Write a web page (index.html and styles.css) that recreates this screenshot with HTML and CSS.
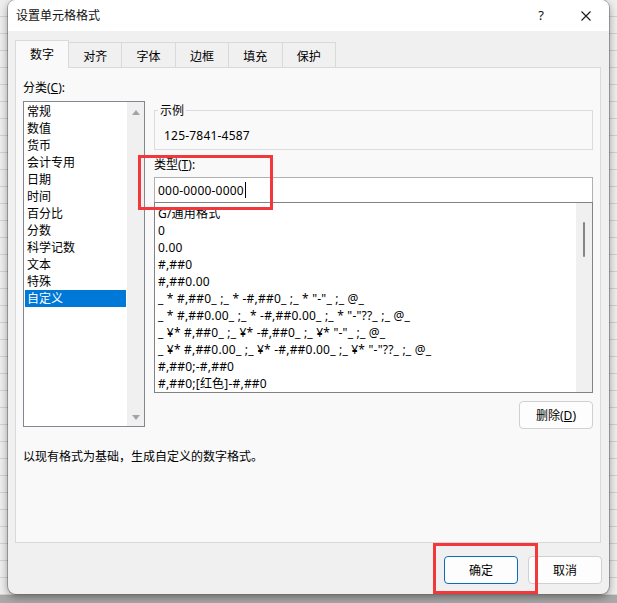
FILE: index.html
```html
<!DOCTYPE html>
<html lang="zh-CN">
<head>
<meta charset="utf-8">
<title>设置单元格格式</title>
<link rel="stylesheet" href="styles.css">
</head>
<body>
<div class="desk">
  <div class="dialog">
    <div class="titlebar">
      <span class="title">设置单元格格式</span>
      <span class="help">?</span>
      <svg class="close" width="10" height="10" viewBox="0 0 10 10"><path d="M0.5 0.5L9.5 9.5M9.5 0.5L0.5 9.5" stroke="#1a1a1a" stroke-width="1.1" fill="none"/></svg>
    </div>
    <div class="main">
      <div class="tabs">
        <div class="tab sel">数字</div>
        <div class="tab">对齐</div>
        <div class="tab">字体</div>
        <div class="tab">边框</div>
        <div class="tab">填充</div>
        <div class="tab">保护</div>
      </div>
      <div class="panel">
        <div class="cols">
          <div class="left">
            <div class="lbl">分类(<u>C</u>):</div>
            <div class="catbox">
              <ul class="catlist">
                <li>常规</li>
                <li>数值</li>
                <li>货币</li>
                <li>会计专用</li>
                <li>日期</li>
                <li>时间</li>
                <li>百分比</li>
                <li>分数</li>
                <li>科学记数</li>
                <li>文本</li>
                <li>特殊</li>
                <li class="on">自定义</li>
              </ul>
              <div class="vscroll">
                <span class="arr up"></span>
                <span class="arr down"></span>
              </div>
            </div>
          </div>
          <div class="right">
            <fieldset class="sample">
              <legend>示例</legend>
              <div class="sval">125-7841-4587</div>
            </fieldset>
            <div class="lbl tlbl">类型(<u>T</u>):</div>
            <div class="typeinput"><span>000-0000-0000</span><span class="caret"></span></div>
            <div class="fmtbox">
              <ul class="fmtlist">
                <li>G/通用格式</li>
                <li>0</li>
                <li>0.00</li>
                <li>#,##0</li>
                <li>#,##0.00</li>
                <li>_ * #,##0_ ;_ * -#,##0_ ;_ * "-"_ ;_ @_</li>
                <li>_ * #,##0.00_ ;_ * -#,##0.00_ ;_ * "-"??_ ;_ @_</li>
                <li>_ ¥* #,##0_ ;_ ¥* -#,##0_ ;_ ¥* "-"_ ;_ @_</li>
                <li>_ ¥* #,##0.00_ ;_ ¥* -#,##0.00_ ;_ ¥* "-"??_ ;_ @_</li>
                <li>#,##0;-#,##0</li>
                <li>#,##0;[红色]-#,##0</li>
              </ul>
              <div class="vscroll2"><span class="thumb"></span></div>
            </div>
            <div class="delrow"><button class="btn">删除(<u>D</u>)</button></div>
          </div>
        </div>
        <div class="desc">以现有格式为基础，生成自定义的数字格式。</div>
      </div>
      <div class="footer">
        <button class="btn ok">确定</button>
        <button class="btn">取消</button>
      </div>
    </div>
  </div>
  <div class="mark mark1"></div>
  <div class="mark mark2"></div>
</div>
</body>
</html>
```
FILE: styles.css
```css
* { box-sizing: border-box; }
html, body { margin: 0; padding: 0; }
body {
  width: 617px;
  height: 603px;
  overflow: hidden;
  font-family: "Noto Sans", "Noto Sans CJK SC", sans-serif;
  font-size: 12px;
  color: #000;
}
.desk {
  position: relative;
  width: 617px;
  height: 603px;
  padding-left: 8px;
  background:
    linear-gradient(to top, #a9a9a9 0, #a9a9a9 8px, transparent 8px),
    repeating-linear-gradient(to bottom, #eeeeee 0, #eeeeee 16px, #d2d2d2 16px, #d2d2d2 17px);
}
.dialog {
  width: 601px;
  height: 594px;
  background: #f0f0f0;
  border-radius: 8px;
  box-shadow: 0 0 0 1px rgba(0,0,0,0.25), 0 3px 8px rgba(0,0,0,0.4);
  display: flex;
  flex-direction: column;
  overflow: hidden;
}
.titlebar {
  flex: none;
  height: 31px;
  background: #fff;
  display: flex;
  align-items: center;
  padding-left: 8px;
  padding-right: 18px;
}
.title { flex: 1; line-height: 17px; color: #111; }
.help { width: 12px; text-align: center; line-height: 17px; margin-right: 34px; font-size: 13px; color: #111; }
.close { display: block; }

.main {
  flex: 1;
  display: flex;
  flex-direction: column;
  padding: 9px 8px 0 7px;
}
.tabs {
  display: flex;
  align-items: flex-end;
  height: 27px;
  position: relative;
  z-index: 1;
}
.tab {
  width: 54.4px;
  height: 25px;
  margin-left: -1px;
  border: 1px solid #d9d9d9;
  border-bottom: none;
  display: flex;
  align-items: center;
  justify-content: center;
  line-height: 17px;
  padding-top: 2px;
  background: #f0f0f0;
}
.tab.sel {
  width: 54px;
  height: 28px;
  margin-left: 0;
  margin-bottom: -1px;
  padding-top: 0;
  background: #f9f9f9;
  position: relative;
  z-index: 2;
}
.panel {
  height: 476px;
  background: #f9f9f9;
  border: 1px solid #d9d9d9;
  padding-left: 7px;
  display: flex;
  flex-direction: column;
}
.cols { display: flex; align-items: flex-start; }
.lbl { line-height: 17px; }
.left { width: 122px; padding-top: 11px; }
.catbox {
  margin-top: 5px;
  width: 122px;
  height: 326px;
  border: 1px solid #828790;
  background: #fff;
  display: flex;
}
ul { list-style: none; margin: 0; padding: 0; }
.catlist { flex: 1; padding-top: 1px; }
.catlist li {
  height: 17px;
  line-height: 17px;
  margin: 0 1px;
  padding-left: 2px;
}
.catlist li.on { background: #0078d7; color: #fff; }
.vscroll {
  width: 17px;
  background: #f0f0f0;
  display: flex;
  flex-direction: column;
  justify-content: space-between;
  align-items: center;
  padding: 8px 0 6px;
}
.arr { width: 0; height: 0; border-left: 4px solid transparent; border-right: 4px solid transparent; }
.arr.up { border-bottom: 5px solid #a3a3a3; }
.arr.down { border-top: 5px solid #a3a3a3; }

.right { width: 439px; margin-left: 9px; padding-top: 34px; }
.sample {
  margin: 0;
  min-width: 0;
  border: 1px solid #dcdcdc;
  padding: 8px 3px 5px;
}
.sample legend { padding: 0 2px; line-height: 17px; }
.sval { padding-left: 6px; line-height: 17px; letter-spacing: 0.2px; }
.tlbl { margin-top: 6px; }
.typeinput {
  margin-top: 4px;
  height: 25px;
  background: #fff;
  border: 1px solid #b0b0b0;
  border-bottom: none;
  padding-left: 3px;
  display: flex;
  align-items: center;
  line-height: 17px;
  letter-spacing: 0.2px;
}
.caret { width: 1px; height: 16px; background: #000; margin-left: 1px; }
.fmtbox {
  height: 191px;
  border: 1px solid #838383;
  background: #fff;
  display: flex;
}
.fmtlist { flex: 1; padding-top: 2px; padding-left: 3px; letter-spacing: 0.2px; }
.fmtlist li { height: 17px; line-height: 17px; white-space: pre; }
.vscroll2 {
  width: 16px;
  background: #f0f0f0;
  padding: 19px 0 0 7px;
}
.thumb { display: block; width: 2px; height: 35px; background: #858585; border-radius: 1px; }
.delrow { display: flex; justify-content: flex-end; margin-top: 8px; }
.btn {
  width: 74px;
  height: 28px;
  border: 1px solid #d0d0d0;
  border-radius: 4px;
  background: #fdfdfd;
  font-family: inherit;
  font-size: 12px;
  color: #000;
  padding: 0;
  line-height: 17px;
}
.desc { margin-top: 19px; line-height: 17px; }
.footer {
  display: flex;
  justify-content: flex-end;
  gap: 10px;
  padding-top: 13px;
  margin-right: -1px;
}
.btn.ok { border-color: #0f6cbd; }

.mark {
  position: absolute;
  border: 3px solid #f2383b;
}
.mark1 { left: 138px; top: 155px; width: 135px; height: 55px; }
.mark2 { left: 433px; top: 543px; width: 105px; height: 51px; }
```
